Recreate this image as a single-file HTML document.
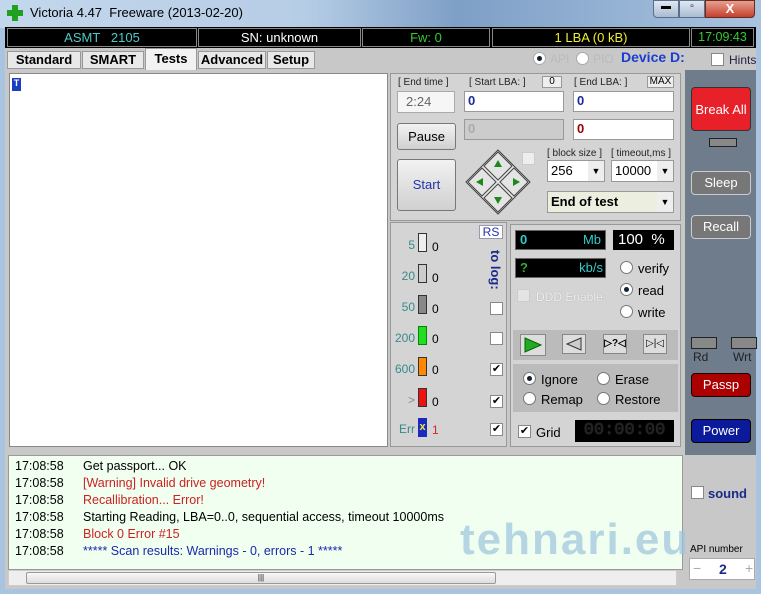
<!DOCTYPE html>
<html><head><meta charset="utf-8"><style>
*{box-sizing:border-box;margin:0;padding:0}
body{width:761px;height:594px;overflow:hidden;background:#a9c4e0;font-family:"Liberation Sans",sans-serif;font-size:12px;position:relative}
.a{position:absolute}
.blk{background:#000;border:1px solid #888;color:#fff;text-align:center;font-size:13px;line-height:17px}
.btn{position:absolute;background:linear-gradient(#f2f2f2,#d0d0d0);border:1px solid #777;border-radius:3px;text-align:center;font-size:13px}
.inp{position:absolute;background:#fff;border:1px solid #999;font-weight:bold;font-size:13px;padding-left:3px;line-height:18px}
.lbl{position:absolute;font-size:10px;color:#222}
.cb{position:absolute;width:13px;height:13px;background:#fff;border:1px solid #888;font-size:11px;line-height:11px;text-align:center;color:#000}
.rd{position:absolute;width:13px;height:13px;background:#fff;border:1px solid #777;border-radius:50%}
.rd.on::after{content:"";position:absolute;left:3px;top:3px;width:5px;height:5px;border-radius:50%;background:#123}
.bar{position:absolute;width:9px;height:19px;border:1px solid #333;left:418px}
.bl{position:absolute;width:40px;left:375px;text-align:right;font-size:12px;color:#3a8a8a}
.bn{position:absolute;left:432px;font-size:12px}
.log div{height:17px;line-height:17px;font-size:12.5px}
.log span{display:inline-block;width:68px}
.dbtn{position:absolute;width:60px;height:44px;border-radius:4px;color:#fff;text-align:center;font-size:13px;line-height:44px;border:1px solid #333}
</style></head><body>
<div class="a" style="left:0;top:0;width:761px;height:28px;background:linear-gradient(90deg,#c3d7ec,#b6cde6 40%,#7e9fc6 60%,#a8c3e0)"></div>
<div class="a" style="left:7px;top:5px;width:16px;height:16px">
<div class="a" style="left:5px;top:0;width:6px;height:16px;background:#1fa01f"></div>
<div class="a" style="left:0;top:5px;width:16px;height:6px;background:#1fa01f"></div></div>
<div class="a" style="left:30px;top:5px;font-size:13px;color:#000">Victoria 4.47&nbsp; Freeware (2013-02-20)</div>
<div class="a" style="left:653px;top:0;width:26px;height:18px;background:linear-gradient(#dfe8f3,#aabcd2);border:1px solid #5a6e88;border-radius:0 0 0 4px;font-size:10px;text-align:center">▬</div>
<div class="a" style="left:679px;top:0;width:26px;height:18px;background:linear-gradient(#dfe8f3,#aabcd2);border:1px solid #5a6e88;font-size:10px;text-align:center">▫</div>
<div class="a" style="left:705px;top:0;width:50px;height:18px;background:linear-gradient(#e8a090,#c4412c);border:1px solid #6a2a20;border-radius:0 0 4px 0;color:#fff;font-weight:bold;text-align:center;font-size:13px">X</div>
<div class="a" style="left:5px;top:27px;width:751px;height:562px;background:#c8c8c8"></div>
<div class="a" style="left:5px;top:27px;width:751px;height:21px;background:#000"></div>
<div class="a blk" style="left:7px;top:28px;width:190px;color:#4fc8c8">ASMT &nbsp; 2105</div>
<div class="a blk" style="left:198px;top:28px;width:163px">SN: unknown</div>
<div class="a blk" style="left:362px;top:28px;width:128px;color:#3c3">Fw: 0</div>
<div class="a blk" style="left:492px;top:28px;width:198px;color:#ee3">1 LBA (0 kB)</div>
<div class="a blk" style="left:691px;top:28px;width:63px;color:#3c3;font-size:12.5px">17:09:43</div>
<div class="a" style="left:7px;top:51px;width:74px;height:18px;background:#e8e8e8;border:1px solid #999;font-weight:bold;font-size:13px;text-align:center">Standard</div>
<div class="a" style="left:82px;top:51px;width:62px;height:18px;background:#e8e8e8;border:1px solid #999;font-weight:bold;font-size:13px;text-align:center">SMART</div>
<div class="a" style="left:145px;top:48px;width:52px;height:22px;background:#f2f2f2;border:1px solid #999;border-bottom:none;font-weight:bold;font-size:13px;text-align:center;padding-top:2px">Tests</div>
<div class="a" style="left:198px;top:51px;width:68px;height:18px;background:#e8e8e8;border:1px solid #999;font-weight:bold;font-size:13px;text-align:center">Advanced</div>
<div class="a" style="left:267px;top:51px;width:48px;height:18px;background:#e8e8e8;border:1px solid #999;font-weight:bold;font-size:13px;text-align:center">Setup</div>
<div class="rd on" style="left:533px;top:52px;border-color:#aaa"></div>
<div class="a" style="left:550px;top:52px;color:#bbb;font-size:12px">API</div>
<div class="rd" style="left:576px;top:52px;border-color:#aaa"></div>
<div class="a" style="left:593px;top:52px;color:#bbb;font-size:12px">PIO</div>
<div class="a" style="left:621px;top:49px;color:#1a3ed0;font-weight:bold;font-size:14px">Device D:</div>
<div class="cb" style="left:711px;top:53px"></div>
<div class="a" style="left:729px;top:53px;font-size:12px;color:#224">Hints</div>
<div class="a" style="left:9px;top:73px;width:379px;height:374px;background:#fff;border:1px solid #888"></div>
<div class="a" style="left:12px;top:78px;width:9px;height:13px;background:#1a3ec0;color:#fff;font-size:9px;font-weight:bold;text-align:center">T</div>
<div class="a" style="left:390px;top:73px;width:291px;height:148px;background:#d4d4d4;border:1px solid #999"></div>
<div class="lbl" style="left:398px;top:77px">[ End time ]</div>
<div class="lbl" style="left:469px;top:77px">[ Start LBA: ]</div>
<div class="a" style="left:542px;top:76px;width:20px;height:12px;background:#eee;border:1px solid #999;font-size:10px;text-align:center;line-height:10px">0</div>
<div class="lbl" style="left:574px;top:77px">[ End LBA: ]</div>
<div class="a" style="left:647px;top:76px;width:27px;height:12px;background:#eee;border:1px solid #999;font-size:10px;text-align:center;line-height:10px">MAX</div>
<div class="a" style="left:397px;top:91px;width:58px;height:22px;background:#f6f6f6;border:1px solid #aaa;color:#666;font-size:13px;padding:2px 0 0 8px">2:24</div>
<div class="inp" style="left:464px;top:91px;width:100px;height:21px;color:#1a2a9a">0</div>
<div class="inp" style="left:573px;top:91px;width:101px;height:21px;color:#1a2a9a">0</div>
<div class="inp" style="left:464px;top:119px;width:100px;height:21px;background:#ccc;color:#aaa">0</div>
<div class="inp" style="left:573px;top:119px;width:101px;height:21px;color:#900">0</div>
<div class="btn" style="left:397px;top:123px;width:59px;height:27px;line-height:25px">Pause</div>
<div class="btn" style="left:397px;top:159px;width:59px;height:52px;line-height:50px;color:#2233aa">Start</div>
<svg class="a" style="left:464px;top:148px" width="68" height="68"><g fill="#e4e4e4" stroke="#444"><polygon points="34,2 66,34 34,66 2,34"/><polygon points="34,4 48,18 34,32 20,18"/><polygon points="50,20 64,34 50,48 36,34"/><polygon points="34,36 48,50 34,64 20,50"/><polygon points="18,20 32,34 18,48 4,34"/></g><g fill="#1a8a1a"><polygon points="34,12 30,19 38,19"/><polygon points="34,56 30,49 38,49"/><polygon points="12,34 19,30 19,38"/><polygon points="56,34 49,30 49,38"/></g></svg>
<div class="cb" style="left:522px;top:152px;background:#eee;border-color:#ccc"></div>
<div class="lbl" style="left:547px;top:148px">[ block size ]</div>
<div class="lbl" style="left:611px;top:148px">[ timeout,ms ]</div>
<div class="inp" style="left:547px;top:160px;width:58px;height:22px;font-weight:normal;line-height:20px">256<span class="a" style="right:0;top:0;width:16px;height:20px;background:#eee;font-size:9px;text-align:center">▼</span></div>
<div class="inp" style="left:611px;top:160px;width:63px;height:22px;font-weight:normal;line-height:20px">10000<span class="a" style="right:0;top:0;width:16px;height:20px;background:#eee;font-size:9px;text-align:center">▼</span></div>
<div class="inp" style="left:547px;top:191px;width:127px;height:22px;background:#eceee0;line-height:20px">End of test<span class="a" style="right:0;top:0;width:16px;height:20px;background:#eee;font-size:9px;text-align:center;font-weight:normal">▼</span></div>
<div class="a" style="left:390px;top:222px;width:117px;height:225px;background:#d4d4d4;border:1px solid #999"></div>
<div class="a" style="left:479px;top:225px;width:24px;height:14px;background:#fff;border:1px solid #99a;color:#2233aa;font-size:12px;text-align:center;line-height:12px">RS</div>
<div class="a" style="left:488px;top:250px;color:#1a2a8a;font-weight:bold;font-size:13px;writing-mode:vertical-rl">to log:</div>
<div class="bl" style="top:238px">5</div>
<div class="bl" style="top:269px">20</div>
<div class="bl" style="top:300px">50</div>
<div class="bl" style="top:331px">200</div>
<div class="bl" style="top:362px">600</div>
<div class="bl" style="top:393px;color:#888">&gt;</div>
<div class="bl" style="top:422px">Err</div>
<div class="bar" style="top:233px;background:#eee"></div>
<div class="bar" style="top:264px;background:#ccc"></div>
<div class="bar" style="top:295px;background:#888"></div>
<div class="bar" style="top:326px;background:#2d2;border-color:#080"></div>
<div class="bar" style="top:357px;background:#f80"></div>
<div class="bar" style="top:388px;background:#e11"></div>
<div class="a" style="left:418px;top:418px;width:9px;height:19px;background:#1a2ac0;color:#ee3;font-weight:bold;font-size:11px;text-align:center;line-height:19px">x</div>
<div class="bn" style="top:240px">0</div>
<div class="bn" style="top:271px">0</div>
<div class="bn" style="top:302px">0</div>
<div class="bn" style="top:332px">0</div>
<div class="bn" style="top:363px">0</div>
<div class="bn" style="top:395px">0</div>
<div class="bn" style="top:423px;color:#d22">1</div>
<div class="cb" style="left:490px;top:302px"></div>
<div class="cb" style="left:490px;top:332px"></div>
<div class="cb" style="left:490px;top:363px">✔</div>
<div class="cb" style="left:490px;top:395px">✔</div>
<div class="cb" style="left:490px;top:423px">✔</div>
<div class="a" style="left:510px;top:224px;width:171px;height:223px;background:#d4d4d4;border:1px solid #999"></div>
<div class="a" style="left:515px;top:230px;width:91px;height:20px;background:#000;border:1px solid #666;color:#3cc;font-weight:bold;font-size:13px;padding-left:4px;line-height:18px">0<span style="float:right;font-weight:normal;padding-right:4px">Mb</span></div>
<div class="a" style="left:613px;top:230px;width:61px;height:20px;background:#000;color:#fff;font-size:15px;padding-left:5px;line-height:20px">100 &nbsp;%</div>
<div class="a" style="left:515px;top:258px;width:91px;height:20px;background:#000;border:1px solid #666;color:#3a3;font-weight:bold;font-size:13px;padding-left:4px;line-height:18px">?<span style="float:right;font-weight:normal;color:#3cc;padding-right:2px">kb/s</span></div>
<div class="cb" style="left:517px;top:289px;background:#e4e4e4;border-color:#ccc"></div>
<div class="a" style="left:536px;top:290px;color:#f0f0f0;font-size:12px;text-shadow:0 0 1px #999">DDD Enable</div>
<div class="rd" style="left:620px;top:261px"></div><div class="a" style="left:638px;top:261px;font-size:13px">verify</div>
<div class="rd on" style="left:620px;top:283px"></div><div class="a" style="left:638px;top:283px;font-size:13px">read</div>
<div class="rd" style="left:620px;top:305px"></div><div class="a" style="left:638px;top:305px;font-size:13px">write</div>
<div class="a" style="left:513px;top:330px;width:165px;height:30px;background:#bbb"></div>
<div class="a" style="left:520px;top:334px;width:26px;height:22px;background:#ddd;border:1px solid #888"><svg width="24" height="20"><polygon points="4,3 20,10 4,17" fill="#2a2" stroke="#060"/></svg></div>
<div class="a" style="left:562px;top:334px;width:24px;height:20px;background:#ddd;border:1px solid #888"><svg width="22" height="18"><polygon points="18,3 4,9 18,15" fill="#ccc" stroke="#333"/></svg></div>
<div class="a" style="left:603px;top:334px;width:24px;height:20px;background:#ddd;border:1px solid #888;font-size:10px;text-align:center;font-weight:bold;line-height:18px;white-space:nowrap;overflow:hidden">▷?◁</div>
<div class="a" style="left:643px;top:334px;width:24px;height:20px;background:#ddd;border:1px solid #888;font-size:10px;text-align:center;line-height:18px;white-space:nowrap;overflow:hidden">▷|◁</div>
<div class="a" style="left:513px;top:364px;width:165px;height:48px;background:#bbb"></div>
<div class="rd on" style="left:523px;top:372px"></div><div class="a" style="left:541px;top:372px;font-size:13px">Ignore</div>
<div class="rd" style="left:597px;top:372px"></div><div class="a" style="left:615px;top:372px;font-size:13px">Erase</div>
<div class="rd" style="left:523px;top:392px"></div><div class="a" style="left:541px;top:392px;font-size:13px">Remap</div>
<div class="rd" style="left:597px;top:392px"></div><div class="a" style="left:615px;top:392px;font-size:13px">Restore</div>
<div class="cb" style="left:518px;top:425px">✔</div><div class="a" style="left:536px;top:425px;font-size:13px">Grid</div>
<div class="a" style="left:575px;top:420px;width:99px;height:22px;background:#000;color:#222;font-family:'Liberation Mono',monospace;font-size:17px;text-align:center;line-height:22px;text-shadow:0 0 1px #555">00:00:00</div>
<div class="a" style="left:685px;top:70px;width:71px;height:385px;background:#6e7c8c"></div>
<div class="dbtn" style="left:691px;top:87px;background:#e8202a;height:44px">Break All</div>
<div class="a" style="left:709px;top:138px;width:28px;height:9px;background:#888;border:1px solid #222"></div>
<div class="dbtn" style="left:691px;top:171px;height:24px;line-height:22px;background:#777;border-color:#ccc">Sleep</div>
<div class="dbtn" style="left:691px;top:215px;height:24px;line-height:22px;background:#777;border-color:#ccc">Recall</div>
<div class="a" style="left:691px;top:337px;width:26px;height:12px;background:#888;border:1px solid #222"></div>
<div class="a" style="left:731px;top:337px;width:26px;height:12px;background:#888;border:1px solid #222"></div>
<div class="a" style="left:693px;top:350px;font-size:12px;color:#222">Rd</div>
<div class="a" style="left:733px;top:350px;font-size:12px;color:#222">Wrt</div>
<div class="dbtn" style="left:691px;top:373px;height:24px;line-height:22px;background:#a00;border-color:#200">Passp</div>
<div class="dbtn" style="left:691px;top:419px;height:24px;line-height:22px;background:#0a1a9a;border-color:#000">Power</div>
<div class="cb" style="left:691px;top:486px"></div>
<div class="a" style="left:708px;top:486px;color:#1a2a8a;font-weight:bold;font-size:13px">sound</div>
<div class="a" style="left:690px;top:544px;font-size:10px">API number</div>
<div class="a" style="left:689px;top:558px;width:66px;height:22px;background:#fff;border:1px solid #aaa;font-size:14px;color:#aaa"><span class="a" style="left:3px;top:1px">−</span><span class="a" style="left:29px;top:2px;color:#1a2a8a;font-weight:bold">2</span><span class="a" style="left:55px;top:1px">+</span></div>
<div class="a log" style="left:8px;top:455px;width:675px;height:115px;background:#f0fff0;border:1px solid #999;padding:2px 0 0 6px">
<div><span>17:08:58</span>Get passport... OK</div>
<div style="color:#c22"><span style="color:#000">17:08:58</span>[Warning] Invalid drive geometry!</div>
<div style="color:#c22"><span style="color:#000">17:08:58</span>Recallibration... Error!</div>
<div><span>17:08:58</span>Starting Reading, LBA=0..0, sequential access, timeout 10000ms</div>
<div style="color:#c22"><span style="color:#000">17:08:58</span>Block 0 Error #15</div>
<div style="color:#1a2aaa"><span style="color:#000">17:08:58</span>***** Scan results: Warnings - 0, errors - 1 *****</div>
</div>
<div class="a" style="left:460px;top:515px;font-size:44px;font-weight:bold;color:#9cc4dc;opacity:.7;letter-spacing:2px">tehnari.eu</div>
<div class="a" style="left:8px;top:570px;width:669px;height:16px;background:#eee;border:1px solid #ccc"></div>
<div class="a" style="left:26px;top:572px;width:470px;height:12px;background:linear-gradient(#f8f8f8,#ddd);border:1px solid #999;border-radius:2px;font-size:8px;text-align:center;line-height:10px">|||</div>
</body></html>
